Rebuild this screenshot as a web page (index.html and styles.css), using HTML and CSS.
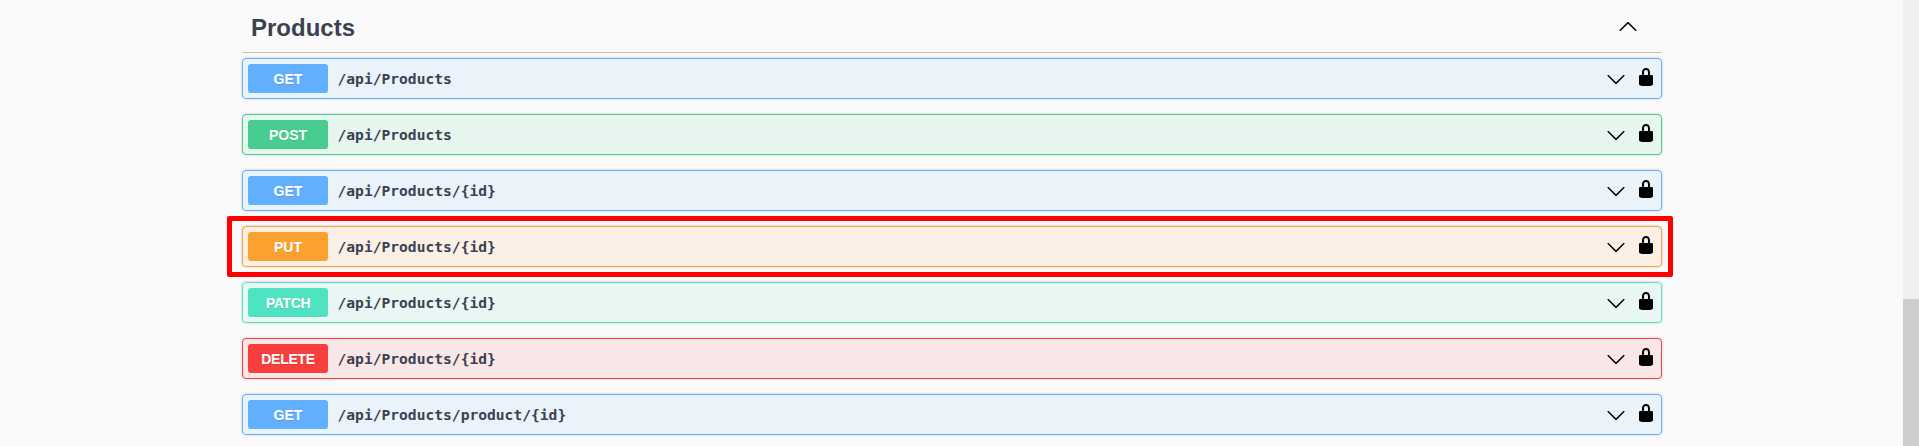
FILE: index.html
```html
<!DOCTYPE html>
<html lang="en">
<head>
<meta charset="utf-8">
<title>Products API</title>
<link rel="stylesheet" href="styles.css">
</head>
<body>
<svg class="sprite" aria-hidden="true">
  <symbol id="down" viewBox="0 0 20 20"><path d="M17.418 6.109c.272-.268.709-.268.979 0s.271.701 0 .969l-7.908 7.83c-.27.268-.707.268-.979 0l-7.908-7.83c-.27-.268-.27-.701 0-.969.271-.268.709-.268.979 0L10 13.25l7.418-7.141z"/></symbol>
  <symbol id="up" viewBox="0 0 20 20"><path d="M17.418 14.908c.272.268.709.268.979 0s.271-.701 0-.969l-7.908-7.83c-.27-.268-.707-.268-.979 0l-7.908 7.83c-.27.268-.27.701 0 .969.271.268.709.268.979 0L10 7.767l7.418 7.141z"/></symbol>
  <symbol id="lock" viewBox="0 0 20 20"><path d="M15.8 8H14V5.6C14 2.703 12.665 1 10 1 7.334 1 6 2.703 6 5.6V8H4c-.553 0-1 .646-1 1.199V17c0 .549.428 1.139.951 1.307l1.197.387C5.672 18.861 6.55 19 7.1 19h5.8c.549 0 1.428-.139 1.951-.307l1.196-.387c.524-.167.953-.757.953-1.306V9.199C17 8.646 16.352 8 15.8 8zM12 8H8V5.199C8 3.754 8.797 3 10 3c1.203 0 2 .754 2 2.199V8z"/></symbol>
</svg>
<div class="page">
  <main class="section">
    <header class="tag"><h3 class="tag-name">Products</h3><svg class="icon"><use href="#up"/></svg></header>
    <div class="operations">
      <div class="op get"><span class="method">GET</span><span class="path">/api/Products</span><svg class="icon arrow"><use href="#down"/></svg><svg class="icon lock"><use href="#lock"/></svg></div>
      <div class="op post"><span class="method">POST</span><span class="path">/api/Products</span><svg class="icon arrow"><use href="#down"/></svg><svg class="icon lock"><use href="#lock"/></svg></div>
      <div class="op get"><span class="method">GET</span><span class="path">/api/Products/{id}</span><svg class="icon arrow"><use href="#down"/></svg><svg class="icon lock"><use href="#lock"/></svg></div>
      <div class="op put"><span class="method">PUT</span><span class="path">/api/Products/{id}</span><svg class="icon arrow"><use href="#down"/></svg><svg class="icon lock"><use href="#lock"/></svg><div class="highlight"></div></div>
      <div class="op patch"><span class="method">PATCH</span><span class="path">/api/Products/{id}</span><svg class="icon arrow"><use href="#down"/></svg><svg class="icon lock"><use href="#lock"/></svg></div>
      <div class="op delete"><span class="method">DELETE</span><span class="path">/api/Products/{id}</span><svg class="icon arrow"><use href="#down"/></svg><svg class="icon lock"><use href="#lock"/></svg></div>
      <div class="op get"><span class="method">GET</span><span class="path">/api/Products/product/{id}</span><svg class="icon arrow"><use href="#down"/></svg><svg class="icon lock"><use href="#lock"/></svg></div>
    </div>
  </main>
  <div class="scrollbar"><div class="thumb"></div></div>
</div>
</body>
</html>
```

FILE: styles.css
```css
* { box-sizing: border-box; }
body { margin: 0; background: #fafafa; color: #3b4151; font-family: "Liberation Sans", Arial, sans-serif; overflow: hidden; }
.sprite { display: none; }
.page { display: flex; height: 446px; }
.section { width: 1420px; margin-left: 242px; }
.icon { display: block; flex: none; width: 20px; height: 20px; }
.tag { display: flex; align-items: center; height: 53px; padding: 0 24px 0 9px; border-bottom: 1px solid rgba(59, 65, 81, .3); }
.tag-name { flex: 1; margin: 3px 0 0; font-size: 24px; line-height: 28px; font-weight: 700; }
.operations { display: flex; flex-direction: column; gap: 15px; padding-top: 5px; }
.op { --c: #61affe; position: relative; display: flex; align-items: center; height: 41px; padding: 5px; border: 1px solid var(--c); border-radius: 4px; background: color-mix(in srgb, var(--c) 10%, transparent); box-shadow: 0 0 3px rgba(0, 0, 0, .19); }
.post { --c: #49cc90; }
.put { --c: #fca130; }
.patch { --c: #50e3c2; }
.delete { --c: #f93e3e; }
.method { width: 80px; height: 29px; padding-top: 1px; border-radius: 3px; background: var(--c); color: #fff; font-size: 14px; line-height: 28px; font-weight: 700; text-align: center; text-shadow: 0 1px 0 rgba(0, 0, 0, .1); }
.patch .method, .delete .method { letter-spacing: -.3px; }
.path { flex: 1; padding: 0 10px 0 9.5px; font-family: "DejaVu Sans Mono", monospace; font-size: 14.62px; line-height: 20px; font-weight: 700; }
.arrow { margin: 0 10px 0 0; }
.lock { margin-bottom: 3px; }
.highlight { position: absolute; inset: -11px -12px -11px -16px; border: 5px solid #f00; border-radius: 2px; }
.scrollbar { width: 16px; margin-left: auto; padding-top: 299px; background: #f0f0f0; }
.thumb { height: 147px; background: #cdcdcd; }
```
